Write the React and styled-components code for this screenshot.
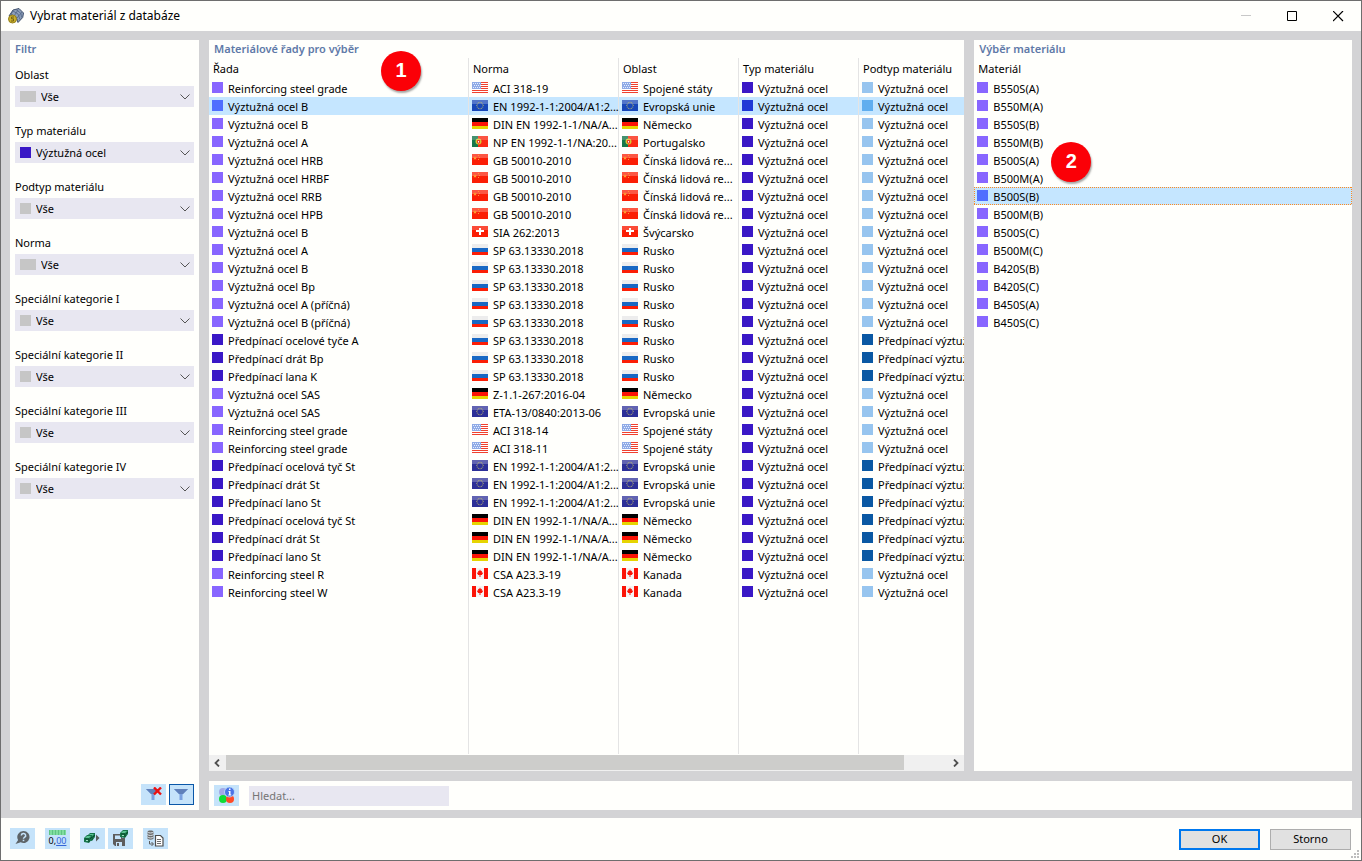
import React from "react";
import styled, { createGlobalStyle, css } from "styled-components";

const theme = {
  window: "#fffffc",
  frame: "#d3d3d5",
  field: "#e8e7f1",
  selected: "#c5e6ff",
  button: "#c5e3fa",
  heading: "#6079a8",
  line: "#e4e4e4",
  focus: "#ff8a1f",
};

const GlobalStyle = createGlobalStyle`
  * {
    box-sizing: border-box;
  }

  body {
    margin: 0;
    color: #000;
    font-family: "Noto Sans", "Open Sans", sans-serif;
    font-size: 11px;
    line-height: 18px;
  }

  button,
  input,
  select {
    color: inherit;
    font: inherit;
  }
`;

const VIOLET = "#8866ff";
const INDIGO = "#3a18c6";
const SKY = "#97c5ef";
const NAVY = "#0a58a3";
const GRAY = "#c6c6c6";

const filters = [
  { id: "region", label: "Oblast", value: "Vše", wide: true, color: GRAY },
  { id: "type", label: "Typ materiálu", value: "Výztužná ocel", color: INDIGO },
  { id: "subtype", label: "Podtyp materiálu", value: "Vše", color: GRAY },
  { id: "standard", label: "Norma", value: "Vše", wide: true, color: GRAY },
  { id: "cat1", label: "Speciální kategorie I", value: "Vše", color: GRAY },
  { id: "cat2", label: "Speciální kategorie II", value: "Vše", color: GRAY },
  { id: "cat3", label: "Speciální kategorie III", value: "Vše", color: GRAY },
  { id: "cat4", label: "Speciální kategorie IV", value: "Vše", color: GRAY },
];

const regions = {
  us: "Spojené státy",
  eu: "Evropská unie",
  de: "Německo",
  pt: "Portugalsko",
  cn: "Čínská lidová re...",
  ch: "Švýcarsko",
  ru: "Rusko",
  ca: "Kanada",
};

// name, standard, region, prestressing
const series = [
  ["Reinforcing steel grade", "ACI 318-19", "us"],
  ["Výztužná ocel B", "EN 1992-1-1:2004/A1:2...", "eu"],
  ["Výztužná ocel B", "DIN EN 1992-1-1/NA/A...", "de"],
  ["Výztužná ocel A", "NP EN 1992-1-1/NA:20...", "pt"],
  ["Výztužná ocel HRB", "GB 50010-2010", "cn"],
  ["Výztužná ocel HRBF", "GB 50010-2010", "cn"],
  ["Výztužná ocel RRB", "GB 50010-2010", "cn"],
  ["Výztužná ocel HPB", "GB 50010-2010", "cn"],
  ["Výztužná ocel B", "SIA 262:2013", "ch"],
  ["Výztužná ocel A", "SP 63.13330.2018", "ru"],
  ["Výztužná ocel B", "SP 63.13330.2018", "ru"],
  ["Výztužná ocel Bp", "SP 63.13330.2018", "ru"],
  ["Výztužná ocel A (příčná)", "SP 63.13330.2018", "ru"],
  ["Výztužná ocel B (příčná)", "SP 63.13330.2018", "ru"],
  ["Předpínací ocelové tyče A", "SP 63.13330.2018", "ru", true],
  ["Předpínací drát Bp", "SP 63.13330.2018", "ru", true],
  ["Předpínací lana K", "SP 63.13330.2018", "ru", true],
  ["Výztužná ocel SAS", "Z-1.1-267:2016-04", "de"],
  ["Výztužná ocel SAS", "ETA-13/0840:2013-06", "eu"],
  ["Reinforcing steel grade", "ACI 318-14", "us"],
  ["Reinforcing steel grade", "ACI 318-11", "us"],
  ["Předpínací ocelová tyč St", "EN 1992-1-1:2004/A1:2...", "eu", true],
  ["Předpínací drát St", "EN 1992-1-1:2004/A1:2...", "eu", true],
  ["Předpínací lano St", "EN 1992-1-1:2004/A1:2...", "eu", true],
  ["Předpínací ocelová tyč St", "DIN EN 1992-1-1/NA/A...", "de", true],
  ["Předpínací drát St", "DIN EN 1992-1-1/NA/A...", "de", true],
  ["Předpínací lano St", "DIN EN 1992-1-1/NA/A...", "de", true],
  ["Reinforcing steel R", "CSA A23.3-19", "ca"],
  ["Reinforcing steel W", "CSA A23.3-19", "ca"],
];

const materials = [
  "B550S(A)",
  "B550M(A)",
  "B550S(B)",
  "B550M(B)",
  "B500S(A)",
  "B500M(A)",
  "B500S(B)",
  "B500M(B)",
  "B500S(C)",
  "B500M(C)",
  "B420S(B)",
  "B420S(C)",
  "B450S(A)",
  "B450S(C)",
];

const stars = Array.from({ length: 12 }, (_, i) => [
  8 + 3.2 * Math.cos((i * Math.PI) / 6),
  5.5 + 3.2 * Math.sin((i * Math.PI) / 6),
]);

const Flag = ({ code, active }) => (
  <FlagSvg viewBox="0 0 16 11" aria-hidden="true">
    {code === "us" && (
      <>
        <path fill="#fff" d="M0 0h16v11H0z" />
        <path
          fill="#f0402e"
          d="M0 0h16v1H0zM0 2h16v1H0zM0 4h16v1H0zM0 6h16v1H0zM0 8h16v1H0zM0 10h16v1H0z"
        />
        <path fill="#8fabe6" d="M0 0h9v7H0z" />
        <path
          stroke="#e6eeff"
          strokeDasharray="1 1"
          d="M1 1.500h8M2 3.500h7M1 5.500h8"
        />
      </>
    )}
    {code === "eu" && (
      <>
        <path fill={active ? "#1746b8" : "#2c2f98"} d="M0 0h16v11H0z" />
        <path fill="#fff" opacity="0.25" d="M0 0h16v4H0z" />
        {stars.map(([x, y]) => (
          <circle key={`${x}-${y}`} cx={x} cy={y} r="0.5" fill="#c9c46a" />
        ))}
      </>
    )}
    {code === "de" && (
      <>
        <path fill="#000" d="M0 0h16v4H0z" />
        <path fill="#fb1407" d="M0 4h16v4H0z" />
        <path fill="#e6d400" d="M0 8h16v3H0z" />
      </>
    )}
    {code === "pt" && (
      <>
        <path fill="#fb2a12" d="M0 0h16v11H0z" />
        <path fill="#17774a" d="M0 0h6v11H0z" />
        <circle cx="6.5" cy="5.5" r="3" fill="#d6c530" />
        <path fill="#e8402c" d="M5 4h3v2.5L6.5 8 5 6.5z" />
        <path fill="#fff" d="M6 5h1v1.5H6z" />
        <path fill="#fff" opacity="0.2" d="M0 0h16v4H0z" />
      </>
    )}
    {code === "cn" && (
      <>
        <path fill="#fb1e05" d="M0 0h16v11H0z" />
        <path fill="#fff" opacity="0.25" d="M0 0h16v4H0z" />
        <path
          fill="#ff9a30"
          d="M3 2l.6 1.3 1.4.1-1 .9.3 1.400L3 5l-1.300.7.300-1.400-1-.9 1.400-.1zM6 1h1v1H6zM7 3h1v1H7zM6 5h1v1H6z"
        />
      </>
    )}
    {code === "ch" && (
      <>
        <path fill="#fb1e05" d="M0 0h16v11H0z" />
        <path fill="#fff" opacity="0.2" d="M0 0h16v4H0z" />
        <path fill="#fff" d="M7 2h2v2h3v2H9v3H7V6H4V4h3z" />
      </>
    )}
    {code === "ru" && (
      <>
        <path fill="#ededed" d="M0 0h16v4H0z" />
        <path fill="#1868c4" d="M0 4h16v4H0z" />
        <path fill="#fb1e05" d="M0 8h16v3H0z" />
      </>
    )}
    {code === "ca" && (
      <>
        <path fill="#f4f4f4" d="M0 0h16v11H0z" />
        <path fill="#fb1407" d="M0 0h4v11H0zM12 0h4v11h-4z" />
        <path
          fill="#fb1407"
          d="M8 1.5l1 1.700 1-.4-.2 1.700 1.500.3-1.500 2.200H8.500V9h-1V7H6.200L4.700 4.800l1.500-.3L6 2.800l1 .4z"
        />
      </>
    )}
  </FlagSvg>
);

const AppIcon = () => (
  <svg width="16" height="16" viewBox="0 0 16 16" aria-hidden="true">
    <path
      d="M1 8l4-6 6-1.500L15.500 5l-.8 4.500L10 14.500 8 9z"
      fill="#8d9fba"
      stroke="#3f4f6b"
    />
    <path
      d="M3 6l5 3 1.500 4M5 3l5 3 2 5.500M8 1.500l5 4 .5 4M2 8l3-5M6 8l4-6M9 10l5-6"
      fill="none"
      stroke="#506485"
      strokeWidth="0.8"
    />
    <circle cx="4.5" cy="11" r="4" fill="#cbb02c" stroke="#94801c" />
    <path
      d="M6 9H3.500v1.800h2V13H3"
      fill="none"
      stroke="#6c5c10"
      strokeWidth="0.9"
    />
  </svg>
);

const Funnel = ({ clear }) => (
  <svg width="17" height="15" viewBox="0 0 17 15" aria-hidden="true">
    <path d="M1 2h14L9.500 7.500V13h-3V7.500z" fill="#78a0e0" />
    <path d="M1 2h14l-5 5H6z" fill="#5f80ba" />
    {clear && (
      <path
        d="M9 0.500l7 7M16 0.500L9 7.500"
        stroke="#ec1010"
        strokeWidth="2.4"
      />
    )}
  </svg>
);

const ColorsIcon = () => (
  <svg width="17" height="17" viewBox="0 0 17 17" aria-hidden="true">
    <circle cx="5" cy="5" r="4" fill="#a3a9e6" />
    <circle cx="5" cy="12" r="4" fill="#10dc34" />
    <circle cx="12" cy="12" r="4" fill="#ff4a26" />
    <circle
      cx="11.5"
      cy="5"
      r="5"
      fill="#4b74e6"
      stroke="#c5e3fa"
      strokeWidth="0.8"
    />
    <path
      d="M11 1.500h1.500V3H11zM10.500 4h2v3.500h.8v.9h-3v-.9h.7V5h-.5z"
      fill="#fff"
    />
  </svg>
);

const HelpIcon = () => (
  <svg width="17" height="16" viewBox="0 0 17 16" aria-hidden="true">
    <path
      d="M9.500 1a6 6 0 1 1-2.800 11.300L1.500 14l2.600-4A6 6 0 0 1 9.500 1z"
      fill="#5d6468"
    />
    <path
      d="M7.300 5.500a2.200 2 0 1 1 3.200 1.800c-.8.4-1 .7-1 1.500"
      fill="none"
      stroke="#c5e3fa"
      strokeWidth="1.5"
    />
    <path d="M8.700 9.700h1.600v1.500H8.700z" fill="#c5e3fa" />
  </svg>
);

const Block = ({ x = 0, y = 0 }) => (
  <g transform={`translate(${x} ${y})`}>
    <path d="M0 3l3-3h5v4L5 8 0 7z" fill="#16754a" />
    <path d="M1 3l2-2h4L5 3z" fill="#5cc394" />
    <path d="M1 4h4v3M6 4l2-2" fill="none" stroke="#0b4a2d" />
    <path d="M2 5h2v1H2z" fill="#9be0c0" />
  </g>
);

const LibraryIcon = () => (
  <svg width="17" height="16" viewBox="0 0 17 16" aria-hidden="true">
    <Block x={3} y={3} />
    <Block x={0} y={5} />
    <path d="M12 4.500l3.500 3.500-3.500 3.500z" fill="#5d5d5d" />
  </svg>
);

const SaveIcon = () => (
  <svg width="17" height="16" viewBox="0 0 17 16" aria-hidden="true">
    <path d="M1 4h9v4h3v8H3l-2-2z" fill="#5d5d5d" />
    <path d="M3 5.500h6V9H3zM4 12h6v4H4z" fill="#c5e3fa" />
    <path d="M5 13h2v3H5z" fill="#5d5d5d" />
    <Block x={8} y={0} />
  </svg>
);

const CopyIcon = () => (
  <svg width="17" height="17" viewBox="0 0 17 17" aria-hidden="true">
    <path
      d="M0.500 1.500c0-1.500 6-1.500 6 0v7c0 1.500-6 1.500-6 0z"
      fill="#6c6c6c"
    />
    <path
      d="M0.500 2c1 1.300 5 1.300 6 0M0.500 4.500c1 1.300 5 1.300 6 0M0.500 7c1 1.300 5 1.300 6 0"
      fill="none"
      stroke="#e8f4fd"
      strokeWidth="0.9"
    />
    <path
      d="M2.500 11v3H6M4.500 12L6.500 14l-2 2"
      fill="none"
      stroke="#5d5d5d"
    />
    <path
      d="M8.500 5.500h5l2.500 2.500v8H8.500z"
      fill="#fff"
      stroke="#4d4d4d"
      strokeWidth="1.2"
    />
    <path
      d="M10 9.500h4M10 11.500h4M10 13.500h4"
      stroke="#6c6c6c"
    />
  </svg>
);

const Filter = ({ filter }) => (
  <FilterGroup>
    <label htmlFor={filter.id}>{filter.label}</label>
    <SelectBox>
      <Swatch color={filter.color} wide={filter.wide} />
      <Select id={filter.id}>
        <option>{filter.value}</option>
      </Select>
      <svg width="10" height="6" viewBox="0 0 10 6" aria-hidden="true">
        <path d="M0.500 0.500L5 5l4.500-4.500" fill="none" stroke="#555" />
      </svg>
    </SelectBox>
  </FilterGroup>
);

const App = () => {
  return (
    <Window>
      <GlobalStyle />
      <TitleBar>
        <AppIcon />
        <WindowTitle>Vybrat materiál z databáze</WindowTitle>
        <WindowButton aria-label="Minimalizovat" disabled>
          <svg width="11" height="11" viewBox="0 0 11 11">
            <path d="M0 4.500h10" stroke="#c8c8c8" />
          </svg>
        </WindowButton>
        <WindowButton aria-label="Maximalizovat">
          <svg width="11" height="11" viewBox="0 0 11 11">
            <path d="M0.500 0.500h9v9h-9z" fill="none" stroke="#000" />
          </svg>
        </WindowButton>
        <WindowButton aria-label="Zavřít">
          <svg width="11" height="11" viewBox="0 0 11 11">
            <path d="M0 0l10 10M10 0L0 10" stroke="#000" strokeWidth="1.2" />
          </svg>
        </WindowButton>
      </TitleBar>

      <Body>
        <FilterPanel>
          <FilterTitle>Filtr</FilterTitle>
          {filters.map((filter) => (
            <Filter key={filter.id} filter={filter} />
          ))}
          <FilterActions>
            <IconButton aria-label="Zrušit filtr">
              <Funnel clear />
            </IconButton>
            <IconButton aria-label="Filtr" $pressed>
              <Funnel />
            </IconButton>
          </FilterActions>
        </FilterPanel>

        <Panel>
          <PanelTitle>Materiálové řady pro výběr</PanelTitle>
          <TableArea>
            <SeriesTable>
              <colgroup>
                <Col size={260} />
                <Col size={150} />
                <Col size={120} />
                <Col size={120} />
                <Col size={160} />
              </colgroup>
              <thead>
                <tr>
                  <Th>Řada</Th>
                  <Th>Norma</Th>
                  <Th>Oblast</Th>
                  <Th>Typ materiálu</Th>
                  <Th>Podtyp materiálu</Th>
                </tr>
              </thead>
              <tbody>
                {series.map(([name, standard, region, prestressed], index) => {
                  const active = index === 1;
                  return (
                    <Row key={index} $active={active}>
                      <Td>
                        <Cell>
                          <Swatch
                            color={
                              active ? "#506eff" : prestressed ? INDIGO : VIOLET
                            }
                          />
                          <Text>{name}</Text>
                        </Cell>
                      </Td>
                      <Td>
                        <Cell>
                          <Flag code={region} active={active} />
                          <Text>{standard}</Text>
                        </Cell>
                      </Td>
                      <Td>
                        <Cell>
                          <Flag code={region} active={active} />
                          <Text>{regions[region]}</Text>
                        </Cell>
                      </Td>
                      <Td>
                        <Cell>
                          <Swatch color={active ? "#1f38d6" : INDIGO} />
                          <Text>Výztužná ocel</Text>
                        </Cell>
                      </Td>
                      <Td>
                        <Cell>
                          <Swatch
                            color={
                              active ? "#60aeef" : prestressed ? NAVY : SKY
                            }
                          />
                          <Text>
                            {prestressed ? "Předpínací výztuž" : "Výztužná ocel"}
                          </Text>
                        </Cell>
                      </Td>
                    </Row>
                  );
                })}
                <tr aria-hidden="true">
                  <Td />
                  <Td />
                  <Td />
                  <Td />
                  <Td />
                </tr>
              </tbody>
            </SeriesTable>
          </TableArea>
          <Scrollbar>
            <ScrollArrow aria-label="Doleva">
              <svg width="7" height="8" viewBox="0 0 7 8">
                <path
                  d="M5 0.500L1.500 4 5 7.500"
                  fill="none"
                  stroke="#505050"
                  strokeWidth="1.8"
                />
              </svg>
            </ScrollArrow>
            <ScrollTrack>
              <ScrollThumb />
            </ScrollTrack>
            <ScrollArrow aria-label="Doprava">
              <svg width="7" height="8" viewBox="0 0 7 8">
                <path
                  d="M2 0.500L5.500 4 2 7.500"
                  fill="none"
                  stroke="#505050"
                  strokeWidth="1.8"
                />
              </svg>
            </ScrollArrow>
          </Scrollbar>
          <Marker left={172} top={11}>
            1
          </Marker>
        </Panel>

        <Panel>
          <PanelTitle>Výběr materiálu</PanelTitle>
          <MaterialTable>
            <thead>
              <tr>
                <Th>Materiál</Th>
              </tr>
            </thead>
            <tbody>
              {materials.map((name) => {
                const active = name === "B500S(B)";
                return (
                  <Row key={name} $active={active} $focused={active}>
                    <Td>
                      <Cell>
                        <Swatch color={active ? "#506eff" : VIOLET} />
                        <Text>{name}</Text>
                      </Cell>
                    </Td>
                  </Row>
                );
              })}
            </tbody>
          </MaterialTable>
          <Marker left={77} top={102}>
            2
          </Marker>
        </Panel>

        <SearchBar>
          <IconButton aria-label="Barvy">
            <ColorsIcon />
          </IconButton>
          <SearchInput placeholder="Hledat..." aria-label="Hledat" />
        </SearchBar>
      </Body>

      <Footer>
        <Tools>
          <IconButton aria-label="Nápověda">
            <HelpIcon />
          </IconButton>
          <IconButton aria-label="Jednotky">
            <Units>
              <UnitsRuler />
              <span>
                0,<UnitsDecimals>00</UnitsDecimals>
              </span>
            </Units>
          </IconButton>
          <ToolGroup>
            <IconButton aria-label="Knihovna">
              <LibraryIcon />
            </IconButton>
            <IconButton aria-label="Uložit">
              <SaveIcon />
            </IconButton>
          </ToolGroup>
          <IconButton aria-label="Kopírovat">
            <CopyIcon />
          </IconButton>
        </Tools>
        <DialogButtons>
          <DialogButton $primary>OK</DialogButton>
          <DialogButton>Storno</DialogButton>
        </DialogButtons>
        <Grip viewBox="0 0 9 9" aria-hidden="true">
          <path
            d="M6 0h2v2H6zM3 3h2v2H3zM6 3h2v2H6zM0 6h2v2H0zM3 6h2v2H3zM6 6h2v2H6z"
            fill="#bdbdbd"
          />
        </Grip>
      </Footer>
    </Window>
  );
};

export default App;

const Window = styled.div`
  background: ${theme.window};
  border: 1px solid #6e6e6e;
  display: flex;
  flex-direction: column;
  height: 100vh;
  min-height: 720px;
`;

const TitleBar = styled.header`
  align-items: center;
  display: flex;
  height: 30px;
  padding-left: 7px;
`;

const WindowTitle = styled.h1`
  flex: 1;
  font-size: 12px;
  font-weight: 400;
  margin: 0;
  padding-left: 6px;
`;

const WindowButton = styled.button`
  align-items: center;
  background: none;
  border: none;
  display: flex;
  height: 30px;
  justify-content: center;
  padding: 0;
  width: 46px;
`;

const Body = styled.main`
  background: ${theme.frame};
  display: grid;
  flex: 1;
  gap: 10px;
  grid-template-columns: 189px minmax(0, 2fr) minmax(0, 1fr);
  grid-template-rows: minmax(0, 1fr) 29px;
  min-height: 0;
  padding: 9px 9px 8px;
`;

const Panel = styled.section`
  background: ${theme.window};
  display: flex;
  flex-direction: column;
  min-width: 0;
  position: relative;
`;

const FilterPanel = styled(Panel)`
  grid-row: span 2;
  padding: 0 5px 5px;
`;

const PanelTitle = styled.h2`
  color: ${theme.heading};
  font-size: 11px;
  font-weight: 600;
  line-height: 18px;
  margin: 0;
  padding: 0 5px;
`;

const FilterTitle = styled(PanelTitle)`
  padding: 0;
`;

const FilterGroup = styled.div`
  display: flex;
  flex-direction: column;
  gap: 2px;
  margin: 8px 0 7px;
`;

const SelectBox = styled.div`
  align-items: center;
  background: ${theme.field};
  display: flex;
  gap: 5px;
  height: 21px;
  padding: 0 4px 0 5px;
`;

const Select = styled.select`
  appearance: none;
  background: none;
  border: none;
  flex: 1;
  min-width: 0;
  padding: 0;
`;

const Swatch = styled.span.withConfig({
  shouldForwardProp: (prop) => !["color", "wide"].includes(prop),
})`
  background: ${({ color }) => color};
  flex: none;
  height: 11px;
  width: ${({ wide }) => (wide ? "16px" : "11px")};
`;

const FlagSvg = styled.svg`
  flex: none;
  height: 11px;
  width: 16px;
`;

const FilterActions = styled.div`
  display: flex;
  gap: 3px;
  justify-content: flex-end;
  margin-top: auto;
`;

const IconButton = styled.button`
  align-items: center;
  background: ${theme.button};
  border: ${({ $pressed }) => ($pressed ? "1px solid #0a57a8" : "none")};
  display: flex;
  flex: none;
  height: 21px;
  justify-content: center;
  padding: 0;
  width: 25px;
`;

const TableArea = styled.div`
  flex: 1;
  margin-bottom: 1px;
  min-height: 0;
  overflow: hidden;
`;

const SeriesTable = styled.table`
  border-collapse: separate;
  border-spacing: 0;
  height: 100%;
  table-layout: fixed;
  width: 810px;
`;

const MaterialTable = styled(SeriesTable)`
  height: auto;
  width: 100%;
`;

const Col = styled.col.withConfig({
  shouldForwardProp: (prop) => prop !== "size",
})`
  width: ${({ size }) => size}px;
`;

const Th = styled.th`
  border-right: 1px solid ${theme.line};
  font-weight: 400;
  height: 21px;
  padding: 0 4px;
  text-align: left;

  &:last-child {
    border-right: none;
  }
`;

const Td = styled.td`
  border-right: 1px solid ${theme.line};
  padding: 0 0 0 3px;

  &:last-child {
    border-right: none;
  }
`;

const dots = (angle) =>
  `repeating-linear-gradient(${angle}, ${theme.focus} 0 1px, transparent 1px 2px)`;

const Row = styled.tr`
  background-color: ${({ $active }) =>
    $active ? theme.selected : "transparent"};
  height: 18px;

  ${({ $focused }) =>
    $focused &&
    css`
      background-image: ${dots("90deg")}, ${dots("90deg")}, ${dots("180deg")},
        ${dots("180deg")};
      background-position: top, bottom, left, right;
      background-repeat: no-repeat;
      background-size: 100% 1px, 100% 1px, 1px 100%, 1px 100%;
    `}
`;

const Cell = styled.div`
  display: flex;
  gap: 5px;
  height: 18px;

  & > ${Swatch}, & > ${FlagSvg} {
    margin-top: 3px;
  }
`;

const Text = styled.span`
  line-height: 20px;
  white-space: nowrap;
`;

const Scrollbar = styled.div`
  background: #f0f0f0;
  display: flex;
  height: 16px;
`;

const ScrollArrow = styled.button`
  align-items: center;
  background: none;
  border: none;
  display: flex;
  justify-content: center;
  padding: 0;
  width: 17px;
`;

const ScrollTrack = styled.div`
  flex: 1;
`;

const ScrollThumb = styled.div`
  background: #cdcdcb;
  height: 15px;
  width: 94%;
`;

// numbered callout lying over a panel
const Marker = styled.div.withConfig({
  shouldForwardProp: (prop) => !["left", "top"].includes(prop),
})`
  background: #fb0007;
  border-radius: 50%;
  box-shadow: 1px 2px 2px rgba(0, 0, 0, 0.35);
  color: #fff;
  font-family: "Liberation Sans", Arial, sans-serif;
  font-size: 20px;
  font-weight: 700;
  height: 40px;
  left: ${({ left }) => left}px;
  line-height: 38px;
  position: absolute;
  text-align: center;
  top: ${({ top }) => top}px;
  width: 40px;
`;

const SearchBar = styled.div`
  align-items: center;
  background: ${theme.window};
  display: flex;
  gap: 10px;
  grid-column: 2 / -1;
  padding: 0 5px;
`;

const SearchInput = styled.input`
  background: ${theme.field};
  border: none;
  height: 20px;
  padding: 0 3px;
  width: 200px;

  &::placeholder {
    color: #757575;
  }
`;

const Footer = styled.footer`
  align-items: center;
  display: flex;
  height: 42px;
  justify-content: space-between;
  padding: 0 10px 2px 9px;
  position: relative;
`;

const Tools = styled.div`
  display: flex;
  gap: 10px;
`;

const ToolGroup = styled.div`
  display: flex;
  gap: 3px;
`;

const Units = styled.span`
  display: flex;
  flex-direction: column;
  font-size: 9px;
  line-height: 12px;
`;

const UnitsRuler = styled.span`
  background: repeating-linear-gradient(90deg, #5fc484 0 1px, #7fdd9e 1px 3px);
  height: 5px;
`;

const UnitsDecimals = styled.u`
  color: #3465d8;
`;

const DialogButtons = styled.div`
  display: flex;
  gap: 10px;
  padding-top: 2px;
`;

const DialogButton = styled.button`
  background: #e1e1e1;
  border: ${({ $primary }) =>
    $primary ? "2px solid #0078ee" : "1px solid #adadad"};
  height: 21px;
  line-height: 16px;
  padding: 0;
  width: 81px;
`;

const Grip = styled.svg`
  bottom: 1px;
  height: 9px;
  position: absolute;
  right: 1px;
  width: 9px;
`;
